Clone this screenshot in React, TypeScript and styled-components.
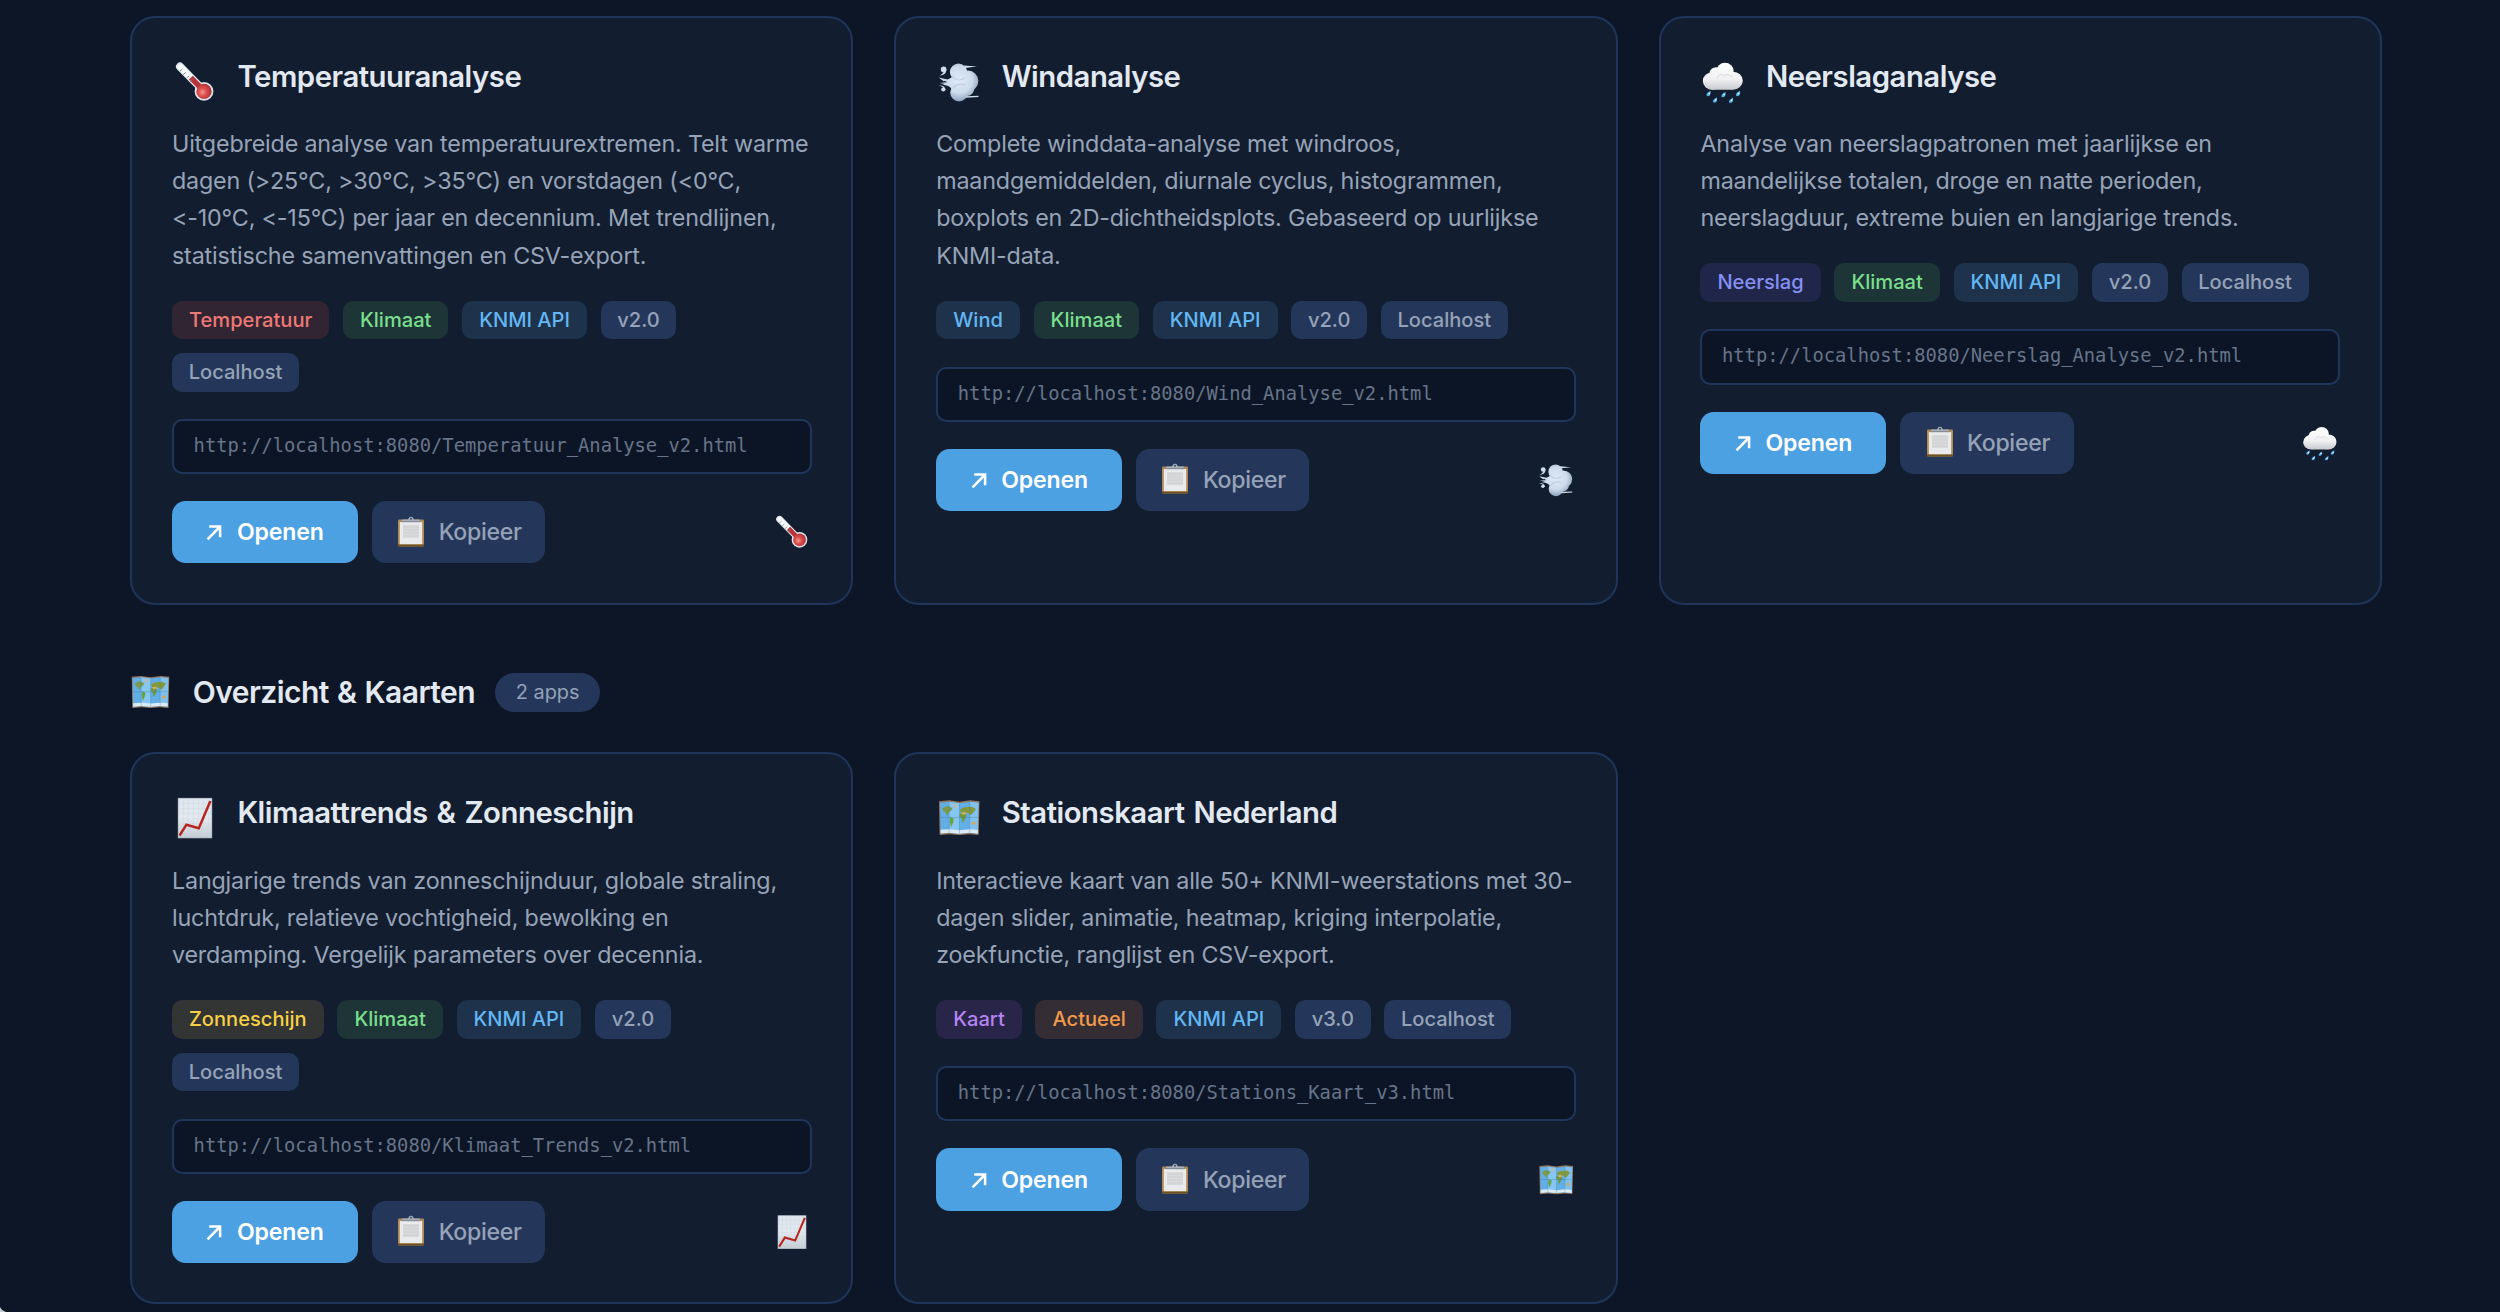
import * as React from "react";
import styled, { createGlobalStyle, css } from "styled-components";

type Tone =
  | "red"
  | "green"
  | "blue"
  | "indigo"
  | "yellow"
  | "purple"
  | "orange"
  | "muted";

type IconName = "thermometer" | "wind" | "rain" | "map" | "chart";

interface AppInfo {
  name: string;
  icon: IconName;
  excerpt: string[];
  tags: [string, Tone][];
  url: string;
}

const tones: Record<Tone, { color: string; background: string }> = {
  red: { color: "#ee7975", background: "#312533" },
  green: { color: "#79df8c", background: "#1e3538" },
  blue: { color: "#62b7f4", background: "#1e334b" },
  indigo: { color: "#8690f4", background: "#1f264a" },
  yellow: { color: "#f6cf47", background: "#323533" },
  purple: { color: "#b583f2", background: "#282549" },
  orange: { color: "#f29a4a", background: "#342e34" },
  muted: { color: "#96a2b7", background: "#24375a" },
};

const weatherApps: AppInfo[] = [
  {
    name: "Temperatuuranalyse",
    icon: "thermometer",
    excerpt: [
      "Uitgebreide analyse van temperatuurextremen. Telt warme",
      "dagen (>25°C, >30°C, >35°C) en vorstdagen (<0°C,",
      "<-10°C, <-15°C) per jaar en decennium. Met trendlijnen,",
      "statistische samenvattingen en CSV-export.",
    ],
    tags: [
      ["Temperatuur", "red"],
      ["Klimaat", "green"],
      ["KNMI API", "blue"],
      ["v2.0", "muted"],
      ["Localhost", "muted"],
    ],
    url: "http://localhost:8080/Temperatuur_Analyse_v2.html",
  },
  {
    name: "Windanalyse",
    icon: "wind",
    excerpt: [
      "Complete winddata-analyse met windroos,",
      "maandgemiddelden, diurnale cyclus, histogrammen,",
      "boxplots en 2D-dichtheidsplots. Gebaseerd op uurlijkse",
      "KNMI-data.",
    ],
    tags: [
      ["Wind", "blue"],
      ["Klimaat", "green"],
      ["KNMI API", "blue"],
      ["v2.0", "muted"],
      ["Localhost", "muted"],
    ],
    url: "http://localhost:8080/Wind_Analyse_v2.html",
  },
  {
    name: "Neerslaganalyse",
    icon: "rain",
    excerpt: [
      "Analyse van neerslagpatronen met jaarlijkse en",
      "maandelijkse totalen, droge en natte perioden,",
      "neerslagduur, extreme buien en langjarige trends.",
    ],
    tags: [
      ["Neerslag", "indigo"],
      ["Klimaat", "green"],
      ["KNMI API", "blue"],
      ["v2.0", "muted"],
      ["Localhost", "muted"],
    ],
    url: "http://localhost:8080/Neerslag_Analyse_v2.html",
  },
];

const overviewApps: AppInfo[] = [
  {
    name: "Klimaattrends & Zonneschijn",
    icon: "chart",
    excerpt: [
      "Langjarige trends van zonneschijnduur, globale straling,",
      "luchtdruk, relatieve vochtigheid, bewolking en",
      "verdamping. Vergelijk parameters over decennia.",
    ],
    tags: [
      ["Zonneschijn", "yellow"],
      ["Klimaat", "green"],
      ["KNMI API", "blue"],
      ["v2.0", "muted"],
      ["Localhost", "muted"],
    ],
    url: "http://localhost:8080/Klimaat_Trends_v2.html",
  },
  {
    name: "Stationskaart Nederland",
    icon: "map",
    excerpt: [
      "Interactieve kaart van alle 50+ KNMI-weerstations met 30-",
      "dagen slider, animatie, heatmap, kriging interpolatie,",
      "zoekfunctie, ranglijst en CSV-export.",
    ],
    tags: [
      ["Kaart", "purple"],
      ["Actueel", "orange"],
      ["KNMI API", "blue"],
      ["v3.0", "muted"],
      ["Localhost", "muted"],
    ],
    url: "http://localhost:8080/Stations_Kaart_v3.html",
  },
];

const drawings: Record<IconName, React.ReactNode> = {
  thermometer: (
    <>
      <path d="M9 8.6 L30 30" stroke="#dfeaf0" strokeWidth="8" strokeLinecap="round" />
      <circle cx="33" cy="33.4" r="9.4" fill="#dbe6ee" />
      <path d="M9.4 9 L20 19.8" stroke="#f8fbfc" strokeWidth="5.4" strokeLinecap="round" />
      <path d="M19.8 19.6 L30 30" stroke="#b93437" strokeWidth="5.4" />
      <circle cx="33" cy="33.4" r="7.7" fill="url(#bulb)" />
      <path d="M8.8 13.2l2.6-2.2M12.2 16.6l2.6-2.2M15.6 20l2.6-2.2M19 23.4l2.6-2.2" stroke="#7b8b96" strokeWidth="1" />
    </>
  ),
  wind: (
    <>
      <g fill="url(#puff)">
        <circle cx="23.5" cy="14" r="8.6" />
        <circle cx="33" cy="23" r="10.4" />
        <circle cx="24" cy="34.6" r="8.8" />
        <circle cx="32" cy="30.5" r="7.4" />
        <circle cx="24" cy="25" r="8" />
        <path d="M8 22c5 0 9-2 11-6l4 15-5 2c-2-4-5-6-11-6l6-2.6z" />
      </g>
      <path d="M17 18c3 4 8 5 13 2M18 30c3-3.5 7-4.5 12-3" stroke="#a9bcd2" strokeWidth="1.4" opacity=".5" />
      <g fill="#cfdeee">
        <circle cx="8.6" cy="11.4" r="2.8" />
        <path d="M11.4 11c0 5-3 6.5-7 6.3 3-1.1 4-2 4.5-5z" />
        <circle cx="8.2" cy="31.6" r="2" />
        <path d="M3.6 27.6c4-.4 6.4 1 7.2 4.4l-1.6.8c0-3-2-4.2-5.6-5.2z" />
        <path d="M3.6 19.6l9 1.8-4 1.8zM4.4 25l9-1 0 2.4z" />
        <path d="M29 7.6l13 1-12 1.4zM31 38.2l12.5-.4v1.2l-12.5.8z" />
      </g>
    </>
  ),
  rain: (
    <g transform="translate(0 1) scale(1 .92)">
      <g fill="url(#cloud)">
        <circle cx="13.4" cy="24" r="9.6" />
        <circle cx="17" cy="15.5" r="6.5" />
        <circle cx="26" cy="12.8" r="8.6" />
        <circle cx="34" cy="23.6" r="9.8" />
        <rect x="11" y="18" width="26" height="15.5" rx="5" />
      </g>
      <path
        d="M18 21.2c.6-3 3-4.6 5.6-4.4M24 18.6c3-2.5 7.4-1.8 8.8.8"
        stroke="#d9dbe0"
        strokeWidth="1.2"
        fill="none"
      />
      <g fill="#58b6ee">
        <path d="M11.5 34.6c.5 3-.5 5.8-2.5 5.8-2.6 0-2-3.2 2.5-5.8z" />
        <path d="M26.5 36c.5 3-.5 5.6-2.5 5.6-2.6 0-2-3.2 2.5-5.6z" />
        <path d="M41 34.6c.5 3-.5 5.8-2.5 5.8-2.6 0-2-3.2 2.5-5.8z" />
        <path d="M18 41.6c.5 3-.5 5.8-2.5 5.8-2.6 0-2-3.2 2.5-5.8z" />
        <path d="M34 42c.5 3-.5 5.6-2.5 5.6-2.6 0-2-3.2 2.5-5.6z" />
      </g>
      <g fill="#e3f5ff">
        <circle cx="10.2" cy="37.6" r=".9" />
        <circle cx="25" cy="38.6" r=".9" />
        <circle cx="39.5" cy="37.6" r=".9" />
        <circle cx="16.6" cy="44.6" r=".9" />
        <circle cx="32.6" cy="44.8" r=".9" />
      </g>
    </g>
  ),
  map: (
    <g transform="translate(0 1.6) scale(1 .95)">
      <path d="M4 6l10-1 10.500 1.600L35 5l9.500 1-.8 35.400-9.400-.8-9.800 1-10-1-9.900.9z" fill="#93775f" />
      <path d="M5 7.500l9-1 10.500 1.500L35 6.500l8.500 1-.8 32.400-8.400-.8-9.800 1-10-1-8.900.9z" fill="#62aee6" />
      <path d="M14 6.500l10.500 1.500v32.100l-10-1z" fill="#85c6f2" />
      <path d="M35 6.500l8.500 1-.8 32.400-8.400-.8z" fill="#80c1ee" />
      <path d="M5.500 36l9-.6 10 1 10-1 8.400.8-.1 3.700-8.500-.8-9.800 1-10-1-8.900.9z" fill="#dcecf5" />
      <path d="M7.500 13l5-2 5 2-1 2.500-2.600 2-1.600 3.600-2-3.600-2.400-1.500z" fill="#7d9a48" />
      <path d="M17 9l5-.7 1 2.600-3 3-2-2.600z" fill="#aebdc0" />
      <path d="M15 22.500l3.900 1.700-.8 4.200-2 4.800-1.400-5.600z" fill="#69a53f" />
      <path d="M25 14.500l4-2.300 8-.5 4 2.300-2.600 3.600-2.400 3-2.400-1.800-2.600-1.200-5 .4z" fill="#84993c" />
      <path d="M24.600 18.900l5.400-.4 1.600 2.800-2 4.200-2 3.400-1.400-5.800-1.600-1z" fill="#6f993d" />
      <path d="M26 17.800l4-.4 1.600 2-4 .8z" fill="#dfb154" />
      <path d="M36.500 28l3-.8 1.300 2.200-2 1.600-2.300-1z" fill="#d9a55b" />
      <path d="M14.200 7v32M24.500 8v32M34.700 7v32M5 23l38 0" stroke="#46799f" strokeWidth=".6" opacity=".6" />
    </g>
  ),
  chart: (
    <>
      <rect x="6.8" y="3.9" width="34.4" height="40.4" fill="#a5afb9" />
      <rect x="7.5" y="4.6" width="33" height="39" fill="url(#sheet)" />
      <path
        d="M12.500 4.600v39M17.500 4.600v39M22.500 4.600v39M27.500 4.600v39M32.500 4.600v39M37.500 4.600v39M7.500 9.600h33M7.500 14.600h33M7.500 19.600h33M7.500 24.600h33M7.500 29.600h33M7.500 34.600h33M7.500 39.600h33"
        stroke="#ccd6df"
        strokeWidth=".4"
      />
      <path d="M8.600 41.500l6.800-10.800 12.400 3.600L39.400 7" fill="none" stroke="#b7261f" strokeWidth="2.5" />
    </>
  ),
};

function Emoji({ name, size }: { name: IconName; size: number }) {
  return (
    <IconSvg viewBox="0 0 48 48" width={size} height={size} fill="none">
      {drawings[name]}
    </IconSvg>
  );
}

function Clipboard() {
  return (
    <ClipboardSvg viewBox="0 0 28 32" width="28" height="32">
      <rect x="1" y="3.5" width="26" height="27" rx="1.2" fill="#b08a50" />
      <path d="M1 28.5h26v1a1 1 0 0 1-1 1H2a1 1 0 0 1-1-1z" fill="#6f5023" />
      <rect x="2.8" y="6" width="22.4" height="22.2" fill="#e9eaec" />
      <rect x="6" y="9" width="16" height="13" fill="#d9dadc" />
      <path d="M6 11h16M6 14h16M6 17h16M6 20h16" stroke="#cbccce" strokeWidth=".8" />
      <path d="M4.5 6l1-2.500h5.500c.6-1 1-2.800 3-2.800s2.400 1.800 3 2.800h5.500l1 2.500z" fill="#a9b0bb" />
      <path d="M4.5 5.700h19" stroke="#7d848f" strokeWidth="1" />
      <circle cx="14" cy="2.8" r="1" fill="#3a4963" />
    </ClipboardSvg>
  );
}

// Shared gradients, referenced by id from the icon drawings
function IconDefs() {
  return (
    <DefsSvg width="0" height="0">
      <defs>
        <radialGradient id="bulb" cx="40%" cy="55%" r="65%">
          <stop offset="0" stopColor="#f39a92" />
          <stop offset=".4" stopColor="#dc4f4d" />
          <stop offset="1" stopColor="#a92c30" />
        </radialGradient>
        <radialGradient id="puff" gradientUnits="userSpaceOnUse" cx="24" cy="22" r="22">
          <stop offset="0" stopColor="#dfeaf7" />
          <stop offset=".6" stopColor="#cddbec" />
          <stop offset="1" stopColor="#8b9eb8" />
        </radialGradient>
        <linearGradient id="cloud" gradientUnits="userSpaceOnUse" x1="0" y1="4" x2="0" y2="34">
          <stop offset="0" stopColor="#ffffff" />
          <stop offset=".6" stopColor="#f1f1f3" />
          <stop offset="1" stopColor="#c6c8cd" />
        </linearGradient>
        <linearGradient id="sheet" x1="0" y1="0" x2="0" y2="1">
          <stop offset="0" stopColor="#dde5ee" />
          <stop offset=".5" stopColor="#e2e9ef" />
          <stop offset="1" stopColor="#c4cdd5" />
        </linearGradient>
      </defs>
    </DefsSvg>
  );
}

function Card({ app }: { app: AppInfo }) {
  return (
    <CardWrapper>
      <CardHeader>
        <Emoji name={app.icon} size={48} />
        <CardTitle>{app.name}</CardTitle>
      </CardHeader>
      <Excerpt>
        {app.excerpt.map((line) => (
          <span key={line}>{line}</span>
        ))}
      </Excerpt>
      <TagList>
        {app.tags.map(([label, tone]) => (
          <Tag key={label} $tone={tone}>
            {label}
          </Tag>
        ))}
      </TagList>
      <UrlBox>{app.url}</UrlBox>
      <Actions>
        <Button $primary>
          <ArrowSvg viewBox="0 0 16 16" width="16" height="16">
            <path d="M1.500 14.300L13.700 2M3.200 1.600h10.900v10.700" />
          </ArrowSvg>
          Openen
        </Button>
        <Button>
          <Clipboard />
          Kopieer
        </Button>
        <Emoji name={app.icon} size={40} />
      </Actions>
    </CardWrapper>
  );
}

export default function App() {
  return (
    <Page>
      <GlobalStyle />
      <IconDefs />
      <Grid>
        {weatherApps.map((app) => (
          <Card key={app.name} app={app} />
        ))}
      </Grid>
      <SectionHeader>
        <Emoji name="map" size={44.5} />
        <SectionTitle>Overzicht &amp; Kaarten</SectionTitle>
        <Count>2 apps</Count>
      </SectionHeader>
      <Grid>
        {overviewApps.map((app) => (
          <Card key={app.name} app={app} />
        ))}
      </Grid>
      <WindowCorner viewBox="0 0 6 5" width="6" height="5">
        <path d="M0 0C1 2 3 4 6 5H0z" fill="#c9cdd1" />
      </WindowCorner>
    </Page>
  );
}

const GlobalStyle = createGlobalStyle`
  * {
    box-sizing: border-box;
  }
  body {
    margin: 0;
    background: #0d1626;
    overflow: hidden;
  }
`;

const Page = styled.main`
  height: 1312px;
  overflow: hidden;
  padding: 15.5px 118.3px 0 130.2px;
  background: #0d1626;
  color: #e3e9f1;
  font-family: Inter, "Liberation Sans", sans-serif;
  -webkit-font-smoothing: antialiased;
`;

const Grid = styled.section`
  display: grid;
  grid-template-columns: repeat(3, 1fr);
  gap: 41.1px;
`;

const CardWrapper = styled.article`
  background: #121d2f;
  border: 2px solid #20355a;
  border-radius: 25px;
  padding: 40px 39.8px 39.5px;
`;

const CardHeader = styled.header`
  display: flex;
  align-items: flex-start;
  gap: 18.5px;
  margin-bottom: 19.6px;
  margin-left: -1px;
`;

const IconSvg = styled.svg`
  display: block;
  flex-shrink: 0;
`;

const CardTitle = styled.h3`
  margin: 0;
  font-size: 29.3px;
  line-height: 37.6px;
  font-weight: 620;
  letter-spacing: -0.47px;
  word-spacing: 2px;
  white-space: nowrap;
`;

const Excerpt = styled.p`
  margin: 0 0 26.9px;
  font-size: 23.3px;
  line-height: 37.15px;
  letter-spacing: -0.17px;
  color: #97a3b7;

  span {
    display: block;
    white-space: nowrap;
  }
`;

const TagList = styled.div`
  display: flex;
  flex-wrap: wrap;
  gap: 13.5px 13.7px;
  margin-bottom: 27.2px;
`;

const Tag = styled.span<{ $tone: Tone }>`
  height: 38.8px;
  padding: 0 ${({ $tone }) => ($tone === "muted" ? 16.7 : 17)}px;
  border-radius: 10.3px;
  font-size: 20.1px;
  line-height: 39.4px;
  font-weight: 500;
  white-space: nowrap;
  ${({ $tone }) => css`
    color: ${tones[$tone].color};
    background: ${tones[$tone].background};
  `}
`;

const UrlBox = styled.div`
  height: 55.2px;
  margin-bottom: 27px;
  padding: 0 19.6px;
  border: 2px solid #20355a;
  border-radius: 10.3px;
  background: #0c1525;
  color: #677489;
  font-family: "DejaVu Sans Mono", "Liberation Mono", monospace;
  font-size: 18.8px;
  line-height: 50px;
  white-space: nowrap;
`;

const Actions = styled.footer`
  display: flex;
  align-items: center;
  gap: 13.7px;

  > svg {
    margin-left: auto;
  }
`;

const Button = styled.button<{ $primary?: boolean }>`
  display: flex;
  align-items: center;
  height: 62.3px;
  border: 0;
  border-radius: 13.7px;
  font-family: inherit;
  font-size: 23.1px;
  white-space: nowrap;
  ${({ $primary }) =>
    $primary
      ? css`
          width: 186px;
          padding: 0 0 0 34.5px;
          gap: 14.5px;
          background: #4ba1e2;
          color: #ffffff;
          font-weight: 600;
          letter-spacing: -0.15px;
        `
      : css`
          width: 173.5px;
          padding: 0 0 0 25.5px;
          gap: 13.5px;
          background: #24375a;
          color: #96a2b7;
          font-weight: 450;
          letter-spacing: -0.3px;
        `}
`;

const ArrowSvg = styled.svg`
  fill: none;
  stroke: #ffffff;
  stroke-width: 2.5;
  margin-top: 2px;
`;

const ClipboardSvg = styled.svg`
  display: block;
  margin-top: -1px;
`;

const SectionHeader = styled.header`
  display: flex;
  align-items: center;
  height: 48px;
  margin: 63.4px 0 36px -2px;
`;

const SectionTitle = styled.h2`
  margin: 0 20px 0 20px;
  font-size: 30px;
  line-height: 40px;
  font-weight: 620;
  letter-spacing: -0.55px;
  word-spacing: 1.2px;
`;

const Count = styled.span`
  height: 38.7px;
  padding: 0 20.7px;
  border-radius: 20px;
  background: #24375a;
  color: #96a2b7;
  font-size: 19.9px;
  line-height: 38.7px;
`;

const DefsSvg = styled.svg`
  position: absolute;
`;

const WindowCorner = styled.svg`
  position: fixed;
  left: 0;
  bottom: 0;
`;
